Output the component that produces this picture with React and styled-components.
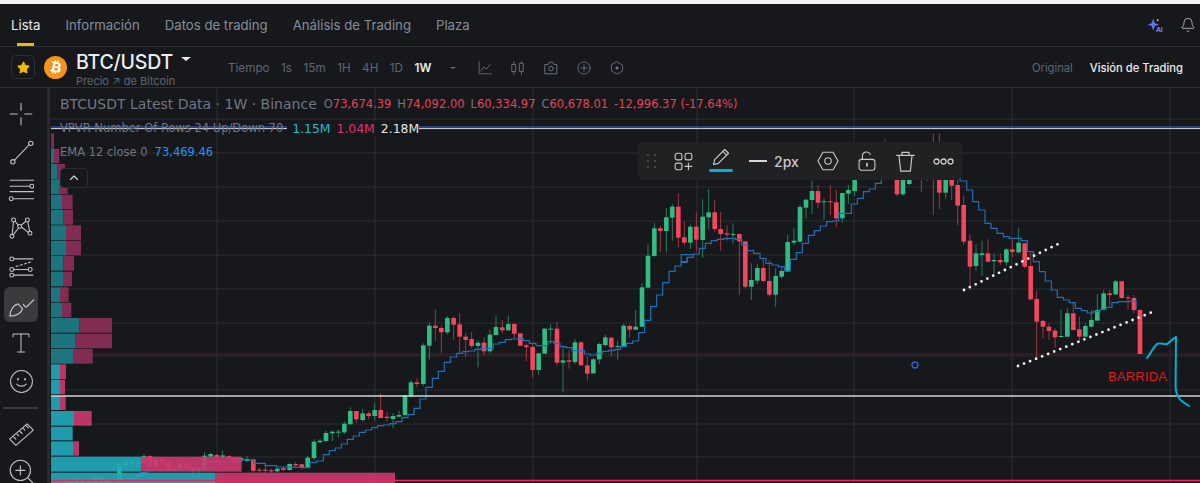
import styled, { createGlobalStyle } from "styled-components";
import { FaStar, FaBtc } from "react-icons/fa";
import { Bell } from "lucide-react";

const GlobalStyle = createGlobalStyle`
  html, body {
    margin: 0;
    padding: 0;
    background: #17181c;
    overflow: hidden;
  }
`;

const Page = styled.div`
  width: 1200px;
  height: 483px;
  display: flex;
  flex-direction: column;
  overflow: hidden;
  background: #17181c;
  font-family: Inter, "Liberation Sans", sans-serif;
`;

const BrowserEdge = styled.div`
  height: 4px;
  background: #f3f3f3;
`;

const TabsBar = styled.div`
  height: 42px;
  flex: none;
  display: flex;
  align-items: center;
  gap: 25px;
  padding: 0 4px 0 11px;
  border-bottom: 1px solid #2b2f36;
`;

const Tab = styled.div`
  position: relative;
  font-size: 13.2px;
  line-height: 42px;
  color: ${({ $active }) => ($active ? "#eaecef" : "#848e9c")};
  &::after {
    content: "";
    display: ${({ $active }) => ($active ? "block" : "none")};
    position: absolute;
    left: 6px;
    right: 6px;
    bottom: 0;
    height: 3px;
    background: #f0b90b;
  }
`;

const TabsRight = styled.div`
  margin-left: auto;
  display: flex;
  align-items: center;
  gap: 17px;
  color: #b7bdc6;
`;

const SubBar = styled.div`
  height: 40px;
  flex: none;
  display: flex;
  align-items: center;
  padding: 0 17px 0 11px;
  border-bottom: 1px solid #2b2f36;
`;

const StarButton = styled.div`
  width: 24px;
  height: 24px;
  box-sizing: border-box;
  border: 1px solid #2b2f36;
  border-radius: 5px;
  display: flex;
  align-items: center;
  justify-content: center;
  color: #f0b90b;
  font-size: 13px;
`;

const CoinLogo = styled.div`
  width: 23px;
  height: 23px;
  margin-left: 9px;
  border-radius: 50%;
  background: #f7931a;
  color: #fff;
  display: flex;
  align-items: center;
  justify-content: center;
  font-size: 14px;
  svg {
    transform: rotate(12deg);
  }
`;

const TitleBlock = styled.div`
  width: 152px;
  margin-left: 9px;
  display: flex;
  flex-direction: column;
  padding-top: 2px;
`;

const PairTitle = styled.div`
  display: flex;
  align-items: center;
  gap: 8px;
  font-size: 19.5px;
  font-weight: 500;
  line-height: 26px;
  color: #eaecef;
  letter-spacing: -0.2px;
`;

const CaretDown = styled.span`
  width: 0;
  height: 0;
  margin-top: ${({ $lift }) => $lift || 0}px;
  margin-left: ${({ $shift }) => $shift || 0}px;
  border-left: ${({ $size }) => $size}px solid transparent;
  border-right: ${({ $size }) => $size}px solid transparent;
  border-top: ${({ $size }) => $size - 1}px solid ${({ $color }) => $color};
`;

const PairSub = styled.div`
  font-size: 11px;
  line-height: 12px;
  color: #5e6673;
  white-space: nowrap;
`;

const TimeRow = styled.div`
  display: flex;
  align-items: center;
  gap: 11.5px;
  margin-top: 2px;
  font-size: 11.7px;
  color: #5e6673;
`;

const TimeItem = styled.span`
  color: ${({ $active }) => ($active ? "#eaecef" : "#5e6673")};
  font-weight: ${({ $active }) => ($active ? 600 : 400)};
`;

const ToolIcons = styled.div`
  display: flex;
  align-items: center;
  gap: 19px;
  margin: 1px 0 0 22px;
  color: #6d7684;
`;

const ViewSwitch = styled.div`
  margin: 2px 0 0 auto;
  display: flex;
  gap: 17px;
  font-size: 11.2px;
`;

const ViewItem = styled.span`
  color: ${({ $active }) => ($active ? "#eaecef" : "#5e6673")};
  font-weight: ${({ $active }) => ($active ? 500 : 400)};
`;

const Main = styled.div`
  flex: 1;
  min-height: 0;
  display: flex;
`;

const Sidebar = styled.div`
  width: 50px;
  flex: none;
  box-sizing: border-box;
  padding: 8px 9px 0 4px;
  display: flex;
  flex-direction: column;
  gap: 3.3px;
  border-right: 3px solid #2a2b2e;
  overflow: hidden;
`;

const SideSlot = styled.div`
  height: 35px;
  flex: none;
  display: flex;
  align-items: center;
  justify-content: center;
  border-radius: 6px;
  color: #bfc2c6;
  background: ${({ $active }) => ($active ? "#3b3b3d" : "transparent")};
`;

const SideDivider = styled.div`
  height: 2px;
  flex: none;
  margin: 5px 0 3px -1px;
  background: #3a3a3c;
`;

const ChartArea = styled.div`
  position: relative;
  flex: 1;
  min-width: 0;
  overflow: hidden;
`;

const ChartSvg = styled.svg`
  display: block;
`;

const Legend = styled.div`
  position: absolute;
  left: 10px;
  top: 4px;
  display: flex;
  flex-direction: column;
  font-family: "DejaVu Sans", "Noto Sans", sans-serif;
  white-space: nowrap;
`;

const LegendRow = styled.div`
  height: 24px;
  display: flex;
  align-items: center;
  gap: ${({ $gap }) => $gap || 7}px;
  font-size: ${({ $size }) => $size || 11.5}px;
  color: #6f7684;
`;

const LegendValues = styled.span`
  display: flex;
  gap: 6px;
  font-size: 12.4px;
  padding-left: 5px;
  margin-left: -3px;
  background: #17181c;
`;

const LegendValue = styled.span`
  color: ${({ $color }) => $color};
`;

const CollapseButton = styled.div`
  position: absolute;
  left: 10px;
  top: 80px;
  width: 28px;
  height: 20px;
  box-sizing: border-box;
  border: 1px solid #2b2d33;
  border-radius: 4px;
  background: #17181c;
  display: flex;
  align-items: center;
  justify-content: center;
  color: #d5d7da;
`;

const DrawToolbar = styled.div`
  position: absolute;
  left: 588px;
  top: 54px;
  width: 324px;
  height: 38px;
  display: flex;
  align-items: center;
  border-radius: 6px;
  background: #202123;
  color: #c9cacc;
`;

const ToolSlot = styled.div`
  width: ${({ $w }) => $w}px;
  flex: none;
  position: relative;
  display: flex;
  align-items: center;
  justify-content: center;
  gap: 7px;
  font-size: 14px;
  font-weight: 500;
`;

const PencilIcon = styled.svg`
  transform: translateY(-4px);
`;

const ActiveMark = styled.span`
  position: absolute;
  left: 7px;
  right: 7px;
  top: calc(50% + 8px);
  height: 3px;
  border-radius: 2px;
  background: #00b4d0;
`;

const LineSample = styled.span`
  width: 18px;
  height: 2px;
  background: #d5d6d8;
`;

const NoteLabel = styled.div`
  position: absolute;
  left: 1058px;
  top: 281px;
  font-family: "Liberation Sans", sans-serif;
  font-size: 13px;
  letter-spacing: 0.2px;
  color: #e01818;
`;

const Ico = ({ size = 24, w = 1, children }) => (
  <svg
    width={size}
    height={size}
    viewBox="0 0 24 24"
    fill="none"
    stroke="currentColor"
    strokeWidth={w}
    strokeLinecap="round"
    strokeLinejoin="round"
  >
    {children}
  </svg>
);

// volume profile rows: top, bottom, teal end, pink end, taken off the picture at 3x (x from 0, y from 90)
const volumeRows = [
  [130, 175, 154, 162, 0],
  [176, 220, 162, 178, 0],
  [222, 267, 172, 195, 0],
  [268, 312, 177, 203, 0],
  [314, 358, 186, 218, 0],
  [360, 404, 190, 219, 0],
  [406, 450, 198, 243, 0],
  [452, 496, 198, 243, 0],
  [498, 542, 190, 222, 0],
  [545, 589, 189, 216, 0],
  [592, 636, 180, 206, 0],
  [638, 682, 186, 214, 0],
  [684, 728, 238, 336, 0],
  [731, 775, 227, 336, 0],
  [777, 821, 219, 278, 0],
  [823, 867, 180, 198, 1],
  [869, 913, 180, 195, 1],
  [918, 960, 180, 197, 1],
  [963, 1007, 222, 275, 1],
  [1010, 1051, 218, 218, 1],
  [1054, 1097, 219, 237, 1],
  [1100, 1145, 425, 725, 1],
  [1148, 1190, 645, 1185, 1],
];

// x, wick top, body top, body bottom, wick bottom
const candlesA = [
  [62, 305, 305, 312, 312, "g"], [80, 295, 296, 312, 312, "g"], [98, 295, 298, 312, 312, "r"],
  [118, 300, 302, 312, 312, "g"], [136, 288, 290, 312, 312, "g"], [154, 288, 290, 312, 312, "r"],
  [172, 296, 300, 312, 312, "g"], [208, 250, 252, 300, 312, "g"], [228, 240, 248, 256, 265, "g"],
  [246, 240, 248, 253, 265, "g"], [264, 238, 246, 250, 265, "g"], [282, 222, 228, 250, 252, "g"],
  [300, 226, 228, 258, 262, "r"], [318, 232, 238, 258, 262, "g"], [337, 232, 237, 248, 256, "r"],
  [355, 246, 246, 265, 270, "r"], [373, 256, 262, 264, 270, "r"], [391, 248, 250, 265, 270, "g"],
  [409, 246, 250, 264, 268, "r"], [427, 258, 260, 272, 278, "r"], [445, 262, 265, 270, 282, "g"],
  [464, 216, 227, 270, 272, "g"], [482, 218, 222, 230, 232, "g"], [500, 222, 225, 233, 236, "r"],
  [518, 212, 226, 232, 234, "g"], [537, 226, 228, 235, 238, "r"], [555, 230, 232, 240, 242, "r"],
  [573, 232, 234, 240, 244, "g"], [591, 228, 237, 243, 246, "g"], [610, 238, 238, 272, 278, "r"],
  [628, 263, 269, 271, 278, "r"], [646, 250, 269, 271, 280, "r"], [664, 266, 271, 273, 280, "r"],
  [682, 262, 266, 274, 278, "g"], [700, 258, 265, 270, 272, "r"], [719, 250, 252, 270, 272, "g"],
  [737, 246, 252, 256, 260, "r"], [755, 252, 253, 263, 268, "r"], [773, 228, 233, 262, 264, "g"],
  [792, 178, 185, 234, 240, "g"], [810, 178, 182, 187, 188, "g"], [828, 152, 159, 183, 186, "g"],
  [847, 152, 155, 160, 183, "g"], [865, 148, 155, 157, 172, "g"], [883, 125, 131, 157, 162, "g"],
  [901, 82, 93, 133, 133, "g"], [919, 93, 93, 118, 128, "r"], [938, 88, 100, 120, 125, "g"],
  [956, 94, 100, 108, 118, "r"], [974, 70, 90, 108, 122, "g"], [992, 40, 90, 114, 115, "r"],
  [1011, 95, 110, 114, 125, "r"], [1029, 100, 108, 117, 145, "g"], [1047, 92, 105, 110, 112, "g"],
  [1065, 45, 46, 105, 110, "g"],
];

const candlesB = [
  [33, 600, 607, 650, 652, "g"], [51, 595, 607, 612, 622, "r"], [70, 490, 496, 612, 618, "g"],
  [88, 428, 437, 497, 538, "g"], [106, 388, 437, 444, 483, "r"], [124, 436, 444, 457, 518, "r"],
  [142, 408, 414, 457, 463, "g"], [161, 410, 414, 434, 480, "r"], [179, 400, 433, 470, 518, "r"],
  [197, 460, 470, 480, 532, "r"], [215, 456, 477, 498, 505, "r"], [234, 480, 488, 498, 562, "g"],
  [252, 472, 488, 514, 525, "r"], [270, 450, 464, 514, 520, "g"], [288, 407, 441, 465, 465, "g"],
  [307, 420, 442, 451, 460, "r"], [325, 407, 432, 451, 452, "g"], [343, 430, 432, 461, 475, "r"],
  [361, 460, 460, 497, 498, "r"], [379, 490, 496, 501, 543, "r"], [398, 490, 501, 570, 593, "r"],
  [416, 518, 520, 570, 585, "g"], [434, 445, 446, 521, 522, "g"], [452, 433, 446, 449, 492, "g"],
  [471, 426, 446, 548, 557, "r"], [489, 496, 541, 548, 638, "g"], [507, 510, 541, 545, 566, "r"],
  [525, 478, 487, 546, 552, "g"], [543, 483, 487, 556, 556, "r"], [562, 530, 556, 581, 602, "r"],
  [580, 535, 538, 580, 582, "g"], [598, 488, 492, 538, 552, "g"], [616, 465, 472, 495, 500, "g"],
  [634, 472, 473, 502, 530, "r"], [653, 483, 498, 500, 538, "g"], [671, 432, 437, 499, 500, "g"],
  [689, 432, 438, 449, 474, "r"], [707, 390, 440, 449, 450, "g"], [726, 310, 322, 440, 442, "g"],
  [744, 193, 227, 323, 323, "g"], [763, 128, 145, 228, 230, "g"], [781, 137, 145, 153, 216, "r"],
  [799, 84, 112, 153, 218, "g"], [817, 72, 80, 113, 182, "g"], [835, 40, 80, 173, 202, "r"],
  [853, 124, 172, 188, 196, "r"], [871, 134, 140, 188, 208, "g"], [889, 97, 140, 179, 213, "r"],
];

const candlesC = [
  [68, 58, 110, 180, 233, "g"], [86, 27, 97, 112, 148, "g"], [104, 60, 97, 147, 155, "r"],
  [122, 97, 147, 162, 212, "r"], [141, 136, 160, 164, 182, "r"], [159, 130, 162, 164, 190, "g"],
  [178, 160, 162, 184, 345, "r"], [196, 184, 184, 320, 325, "r"], [214, 250, 300, 320, 360, "g"],
  [232, 253, 264, 302, 313, "g"], [250, 236, 264, 303, 308, "r"], [268, 240, 303, 344, 350, "r"],
  [287, 264, 288, 344, 380, "g"], [305, 260, 273, 290, 296, "g"], [323, 165, 186, 275, 275, "g"],
  [342, 145, 182, 188, 195, "g"], [360, 75, 81, 185, 188, "g"], [378, 56, 59, 83, 116, "g"],
  [396, 3, 33, 60, 103, "g"], [414, 15, 33, 68, 85, "r"], [432, 55, 64, 67, 120, "g"],
  [451, 16, 64, 67, 105, "r"], [469, 30, 67, 115, 142, "r"], [487, 38, 39, 115, 128, "g"],
  [505, 15, 30, 41, 72, "g"], [524, -20, -20, 33, 48, "g"],
  [651, -20, -20, 43, 48, "r"], [669, -20, -20, 43, 48, "g"], [688, -20, -20, 12, 16, "g"],
  [724, -20, -20, -5, 37, "r"], [742, -20, -20, -4, 3, "g"], [760, -140, -20, -10, 105, "r"],
  [778, -140, -20, 38, 87, "r"], [797, -20, -20, 38, 55, "g"], [815, -20, -20, 17, 60, "r"],
  [833, -20, 15, 77, 135, "r"], [851, 47, 75, 185, 195, "r"], [870, 163, 182, 260, 320, "r"],
  [888, 192, 220, 258, 273, "g"],
];

const candlesD = [
  [96, 62, 100, 105, 168, "g"], [114, 58, 100, 125, 128, "r"], [132, 100, 120, 124, 162, "g"],
  [151, 100, 120, 127, 135, "r"], [169, 85, 88, 127, 138, "g"], [187, 58, 88, 96, 112, "r"],
  [206, 25, 68, 97, 100, "g"], [224, 68, 70, 140, 145, "r"], [242, 100, 138, 238, 240, "r"],
  [260, 212, 237, 305, 410, "r"], [279, 300, 303, 320, 355, "r"], [297, 310, 320, 333, 360, "r"],
  [315, 325, 332, 352, 382, "r"], [333, 268, 348, 350, 352, "g"], [352, 265, 280, 350, 352, "g"],
  [370, 248, 280, 330, 332, "r"], [388, 290, 328, 350, 365, "r"], [406, 310, 318, 350, 352, "g"],
  [424, 270, 300, 320, 322, "g"], [442, 222, 270, 302, 302, "g"], [461, 210, 220, 270, 272, "g"],
  [479, 210, 220, 225, 258, "r"], [497, 180, 184, 223, 225, "g"], [515, 183, 184, 234, 236, "r"],
  [534, 225, 232, 235, 268, "r"], [552, 225, 234, 270, 280, "r"], [570, 268, 270, 402, 402, "r"],
];

const toCandles = (rows, ox, oy) =>
  rows.map(([x, wt, bt, bb, wb, c]) => ({
    x: ox + x / 3,
    wt: oy + wt / 3,
    bt: oy + bt / 3,
    bb: oy + bb / 3,
    wb: oy + wb / 3,
    c,
  }));

const candles = [
  ...toCandles(candlesA, 50, 380),
  ...toCandles(candlesB, 400, 180),
  ...toCandles(candlesC, 680, 180),
  ...toCandles(candlesD, 950, 220),
  { x: 885, wt: 139, bt: 170, bb: 171, wb: 171, c: "r" },
];

const emaA = [[235, 295], [255, 287], [273, 278], [291, 271], [310, 269], [400, 265], [470, 245], [575, 240], [610, 250], [646, 257], [680, 261], [720, 262], [755, 263], [780, 247], [800, 243], [820, 224], [838, 212], [856, 204], [874, 192], [892, 178], [910, 168], [928, 157], [946, 150], [965, 143], [983, 137], [1001, 135], [1020, 131], [1038, 125], [1056, 113], [1074, 104], [1092, 85], [1110, 55]];
const emaB = [[60, 657], [78, 622], [97, 595], [115, 574], [133, 547], [151, 531], [170, 520], [188, 515], [206, 513], [224, 508], [243, 505], [280, 492], [298, 487], [316, 479], [334, 477], [352, 476], [370, 482], [388, 490], [408, 497], [425, 497], [443, 485], [462, 490], [480, 500], [498, 503], [516, 512], [553, 522], [571, 525], [590, 520], [608, 514], [626, 511], [644, 508], [662, 500], [680, 490], [698, 483], [716, 458], [734, 421], [752, 380], [770, 345], [788, 308], [807, 274], [825, 258], [843, 247], [861, 232], [880, 224]];
const emaC = [[4, 245], [22, 232], [40, 222], [58, 205], [76, 190], [94, 182], [112, 178], [130, 176], [148, 175], [166, 178], [185, 195], [203, 212], [221, 220], [240, 235], [258, 250], [276, 255], [294, 260], [313, 273], [331, 238], [349, 218], [367, 190], [385, 166], [403, 152], [421, 138], [440, 125], [458, 123], [476, 100], [514, 72], [532, 55], [550, 35], [568, 27], [586, 10], [604, -4], [640, -10], [690, -30], [760, -20], [840, 3], [860, 30], [878, 65], [896, 90]];
const emaD = [[105, 10], [123, 25], [141, 40], [160, 50], [178, 55], [214, 62], [232, 95], [250, 125], [268, 155], [286, 183], [304, 210], [322, 232], [340, 240], [358, 248], [376, 265], [394, 272], [412, 279], [430, 275], [450, 268], [468, 262], [486, 248], [504, 245], [540, 243], [558, 268]];

const emaPoints = [
  ...emaA.map(([x, y]) => [50 + x / 3, 380 + y / 3]),
  ...emaB.map(([x, y]) => [400 + x / 3, 180 + y / 3]),
  ...emaC.map(([x, y]) => [680 + x / 3, 180 + y / 3]),
  ...emaD.map(([x, y]) => [950 + x / 3, 220 + y / 3]),
];

const emaPath = emaPoints
  .map(([x, y], i) => (i === 0 ? `M${x} ${y}` : `H${x}V${y}`))
  .join("");

const gridX = [217, 375, 533, 697, 854, 1012, 1170];
const gridY = [119, 153, 187, 221, 255, 289, 323, 356, 390, 424, 457];

const PriceChart = () => (
  <ChartSvg width="1150" height="395" viewBox="50 88 1150 395">
    {gridX.map(x => (
      <line key={x} x1={x} x2={x} y1="88" y2="483" stroke="#2a2c31" strokeWidth="1.2" />
    ))}
    {gridY.map(y => (
      <line key={y} x1="50" x2="1200" y1={y} y2={y} stroke="#2a2c31" strokeWidth="1.2" />
    ))}
    <line x1="50" x2="1200" y1="354" y2="354" stroke="#7a2a3a" strokeWidth="1" strokeDasharray="1.5 1.5" />
    {candles.map((k, i) => {
      const color = k.c === "g" ? "#2ebd85" : "#f6465d";
      return (
        <g key={i}>
          <line x1={k.x} x2={k.x} y1={k.wt} y2={k.wb} stroke={color} strokeOpacity="0.62" strokeWidth="1" />
          <rect x={k.x - 2.3} y={k.bt} width="4.6" height={Math.max(k.bb - k.bt, 1)} fill={color} />
        </g>
      );
    })}
    <path d={emaPath} fill="none" stroke="#1f6fb5" strokeWidth="1.2" />
    {volumeRows.map(([top, bottom, teal, pink, bright]) => (
      <g key={top}>
        <rect
          x="51"
          y={90 + top / 3}
          width={teal / 3 - 51}
          height={(bottom - top) / 3}
          fill={bright ? "#22a7b8" : "#1f7d87"}
          fillOpacity="0.92"
        />
        <rect
          x={teal / 3}
          y={90 + top / 3}
          width={(pink - teal) / 3}
          height={(bottom - top) / 3}
          fill={bright ? "#c9396f" : "#8b2f57"}
          fillOpacity="0.92"
        />
      </g>
    ))}
    <line x1="51" x2="1200" y1="127" y2="127" stroke="#3f68d8" strokeWidth="1.2" />
    <line x1="51" x2="1200" y1="128.6" y2="128.6" stroke="#d6d8dc" strokeWidth="1" />
    <line x1="51" x2="1200" y1="396" y2="396" stroke="#d4d4d4" strokeWidth="1.4" />
    <line x1="51" x2="1200" y1="480.5" y2="480.5" stroke="#e8285f" strokeWidth="1.6" />
    <line x1="964" y1="290" x2="1058" y2="244" stroke="#f2f2f2" strokeWidth="2.8" strokeLinecap="round" strokeDasharray="0 6.5" />
    <line x1="1018" y1="366" x2="1155" y2="311" stroke="#f2f2f2" strokeWidth="2.8" strokeLinecap="round" strokeDasharray="0 6.5" />
    <circle cx="915" cy="365" r="3" fill="none" stroke="#2d62c8" strokeWidth="1.4" />
    <path
      d="M1147 358 C1150 354 1153 348 1157 344 C1160 342 1164 345 1167 344 C1170 342 1173 338 1176 337 L1175.6 387 C1176 395 1180 400 1183 402 L1189 406"
      fill="none"
      stroke="#00b0d4"
      strokeWidth="2"
      strokeLinecap="round"
      strokeLinejoin="round"
    />
  </ChartSvg>
);

const sideIcons = [
  <Ico key="cross" size={26}>
    <path d="M12 2v6.5M12 15.5v6.5M2 12h6.5M15.5 12h6.5" />
  </Ico>,
  <Ico key="line" size={26}>
    <circle cx="4.5" cy="21" r="2" />
    <circle cx="21" cy="4" r="2" />
    <path d="M6 19.5 19.5 5.5" />
  </Ico>,
  <Ico key="channel" size={26}>
    <circle cx="22" cy="8.5" r="1.8" />
    <circle cx="3" cy="20" r="1.8" />
    <path d="M2 3h22M2 8.5h18M2 13.5h22M5 20h19" />
  </Ico>,
  <Ico key="pattern" size={26}>
    <circle cx="5.2" cy="4.6" r="1.8" />
    <circle cx="17.9" cy="4.6" r="1.8" />
    <circle cx="10.8" cy="10.5" r="1.8" />
    <circle cx="3.7" cy="19.7" r="1.8" />
    <circle cx="20.3" cy="16.9" r="1.8" />
    <path d="M5 6.4 3.9 17.9M6.6 5.8 9.4 9.3M16.5 5.8 12.2 9.3M18.3 6.4 20 15.1M9.7 12 4.8 18.3M12.6 11.3 18.7 16" />
  </Ico>,
  <Ico key="fib" size={26}>
    <circle cx="3.5" cy="4.5" r="1.8" />
    <circle cx="3.5" cy="14.3" r="1.8" />
    <circle cx="3.5" cy="19.5" r="1.8" />
    <circle cx="20.5" cy="14.3" r="1.8" />
    <path d="M5.5 4.5H23M5.5 14.3h13M5.5 19.5H23" />
    <path d="M7.5 11.5 20.5 7.5" strokeDasharray="2 2" />
  </Ico>,
  <Ico key="brush" size={28}>
    <path d="M2.5 21.5c0-5 3-9.5 7-10.5l3.800 4.200c-1 3.500-5 6.300-10.800 6.300Z" />
    <path d="M14 11.5c.6 1 1.300 2 2.400 2.400L23 7.5" />
  </Ico>,
  <Ico key="text" size={24}>
    <path d="M4 6V3h16v3M12 3v18M8.5 21h7" />
  </Ico>,
  <Ico key="smile" size={25}>
    <circle cx="12" cy="12" r="10.5" />
    <path d="M7.5 14.5c2.200 2.600 6.800 2.600 9 0" />
    <path d="M8.6 9.5v.6M15.4 9.5v.6" strokeWidth="1.8" />
  </Ico>,
];

const App = () => (
  <Page>
    <GlobalStyle />
    <BrowserEdge />
    <TabsBar>
      <Tab $active>Lista</Tab>
      <Tab>Información</Tab>
      <Tab>Datos de trading</Tab>
      <Tab>Análisis de Trading</Tab>
      <Tab>Plaza</Tab>
      <TabsRight>
        <svg width="16" height="17" viewBox="0 0 18 18">
          <path d="M7 1.5 8.8 6.4 13.5 8 8.8 9.7 7 15 5.2 9.7.5 8l4.700-1.600Z" fill="#5b74f0" />
          <circle cx="12" cy="3" r="1.2" fill="#c77dd8" />
          <text x="10" y="16" fontFamily="Inter, sans-serif" fontSize="7.5" fontWeight="700" fill="#7a8cf5">AI</text>
        </svg>
        <Bell size={16} strokeWidth={1.3} />
      </TabsRight>
    </TabsBar>
    <SubBar>
      <StarButton>
        <FaStar />
      </StarButton>
      <CoinLogo>
        <FaBtc />
      </CoinLogo>
      <TitleBlock>
        <PairTitle>
          BTC/USDT
          <CaretDown $size={5} $color="#eaecef" $lift={-6} />
        </PairTitle>
        <PairSub>Precio ↗ de Bitcoin</PairSub>
      </TitleBlock>
      <TimeRow>
        <TimeItem>Tiempo</TimeItem>
        <TimeItem>1s</TimeItem>
        <TimeItem>15m</TimeItem>
        <TimeItem>1H</TimeItem>
        <TimeItem>4H</TimeItem>
        <TimeItem>1D</TimeItem>
        <TimeItem $active>1W</TimeItem>
        <CaretDown $size={3.5} $color="#6d7684" $shift={7} />
      </TimeRow>
      <ToolIcons>
        <Ico size={14} w={1.4}>
          <path d="M2 1v21h21M5 17l5-7 4 4 7-8" />
        </Ico>
        <Ico size={14} w={1.5}>
          <path d="M5 1v22M18 1v22" />
          <rect x="2" y="6" width="6" height="12" fill="#17181c" />
          <rect x="15" y="4" width="6" height="14" fill="#17181c" />
        </Ico>
        <Ico size={14} w={1.6}>
          <path d="M2 6h5l2-4h6l2 4h5v16H2Z" />
          <circle cx="12" cy="13" r="4" />
        </Ico>
        <Ico size={14} w={1.5}>
          <circle cx="12" cy="12" r="10.5" />
          <path d="M12 6.5v11M6.5 12h11" />
        </Ico>
        <Ico size={14} w={1.5}>
          <path d="M12 1.5 21.5 7v10L12 22.5 2.5 17V7Z" />
          <circle cx="12" cy="12" r="2" fill="currentColor" />
        </Ico>
      </ToolIcons>
      <ViewSwitch>
        <ViewItem>Original</ViewItem>
        <ViewItem $active>Visión de Trading</ViewItem>
      </ViewSwitch>
    </SubBar>
    <Main>
      <Sidebar>
        {sideIcons.map((icon, i) => (
          <SideSlot key={i} $active={i === 5}>
            {icon}
          </SideSlot>
        ))}
        <SideDivider />
        <SideSlot>
          <Ico size={27}>
            <path d="M1.5 17 17 3.5l5.5 5.5L7 22.5Z" />
            <path d="M5 15l2 2M8 12.5l1.5 1.5M10.5 10l2 2M13.5 7.5l1.5 1.5M16 5l2 2" />
          </Ico>
        </SideSlot>
        <SideSlot>
          <Ico size={27}>
            <circle cx="11" cy="11" r="9" />
            <path d="M11 7v8M7 11h8M18 18l4.500 4.500" />
          </Ico>
        </SideSlot>
      </Sidebar>
      <ChartArea>
        <PriceChart />
        <Legend>
          <LegendRow $size={14}>
            <span>BTCUSDT Latest Data · 1W · Binance</span>
            <LegendRow as="span" $size={11.5} $gap={6}>
              <span>O<LegendValue $color="#e8425a">73,674.39</LegendValue></span>
              <span>H<LegendValue $color="#e8425a">74,092.00</LegendValue></span>
              <span>L<LegendValue $color="#e8425a">60,334.97</LegendValue></span>
              <span>C<LegendValue $color="#e8425a">60,678.01</LegendValue></span>
              <LegendValue $color="#e8425a">-12,996.37 (-17.64%)</LegendValue>
            </LegendRow>
          </LegendRow>
          <LegendRow>
            <span>VPVR Number Of Rows 24 Up/Down 70</span>
            <LegendValues>
              <LegendValue $color="#25b7cc">1.15M</LegendValue>
              <LegendValue $color="#e0306f">1.04M</LegendValue>
              <LegendValue $color="#e6e6e6">2.18M</LegendValue>
            </LegendValues>
          </LegendRow>
          <LegendRow>
            <span>EMA 12 close 0</span>
            <LegendValue $color="#2196f3">73,469.46</LegendValue>
          </LegendRow>
        </Legend>
        <CollapseButton>
          <Ico size={12} w={2.2}>
            <path d="M5 15l7-7 7 7" />
          </Ico>
        </CollapseButton>
        <DrawToolbar>
          <ToolSlot $w={26}>
            <svg width="9" height="14" viewBox="0 0 9 14" fill="#55565a">
              {[1, 7, 13].flatMap(y =>
                [1, 8].map(x => <circle key={`${x}-${y}`} cx={x} cy={y} r="1" />)
              )}
            </svg>
          </ToolSlot>
          <ToolSlot $w={38}>
            <Ico size={19} w={1.4}>
              <rect x="1.5" y="1.5" width="8.5" height="8.5" rx="2.5" />
              <rect x="14" y="1.5" width="8.5" height="8.5" rx="2.5" />
              <rect x="1.5" y="14" width="8.5" height="8.5" rx="2.5" />
              <path d="M18.2 14v8.5M14 18.2h8.5" />
            </Ico>
          </ToolSlot>
          <ToolSlot $w={38}>
            <PencilIcon width="18" height="18" viewBox="0 0 24 24" fill="none" stroke="currentColor" strokeWidth="1.5" strokeLinejoin="round">
              <path d="M2 22l1.500-6.500L17 2l5 5L8.500 20.500Z" />
              <path d="M14.5 4.500l5 5" />
            </PencilIcon>
            <ActiveMark />
          </ToolSlot>
          <ToolSlot $w={68}>
            <LineSample />
            2px
          </ToolSlot>
          <ToolSlot $w={40}>
            <Ico size={22} w={1.2}>
              <path d="M1 12 6.5 2.5h11L23 12l-5.500 9.500h-11Z" />
              <circle cx="12" cy="12" r="3.5" />
            </Ico>
          </ToolSlot>
          <ToolSlot $w={38}>
            <Ico size={20} w={1.3}>
              <rect x="2.5" y="10" width="19" height="13" rx="3" />
              <path d="M6.5 10V6a5 5 0 0 1 9.500-2" />
              <path d="M12 15v3" strokeWidth="2" />
            </Ico>
          </ToolSlot>
          <ToolSlot $w={39}>
            <Ico size={21} w={1.3}>
              <path d="M2 5h20M8 5V1.500h8V5M4.500 5l2 18h11l2-18" />
            </Ico>
          </ToolSlot>
          <ToolSlot $w={37}>
            <svg width="21" height="7" viewBox="0 0 21 7" fill="none" stroke="currentColor" strokeWidth="1.3">
              <circle cx="3.5" cy="3.5" r="2.5" />
              <circle cx="10.5" cy="3.5" r="2.5" />
              <circle cx="17.5" cy="3.5" r="2.5" />
            </svg>
          </ToolSlot>
        </DrawToolbar>
        <NoteLabel>BARRIDA</NoteLabel>
      </ChartArea>
    </Main>
  </Page>
);

export default App;
